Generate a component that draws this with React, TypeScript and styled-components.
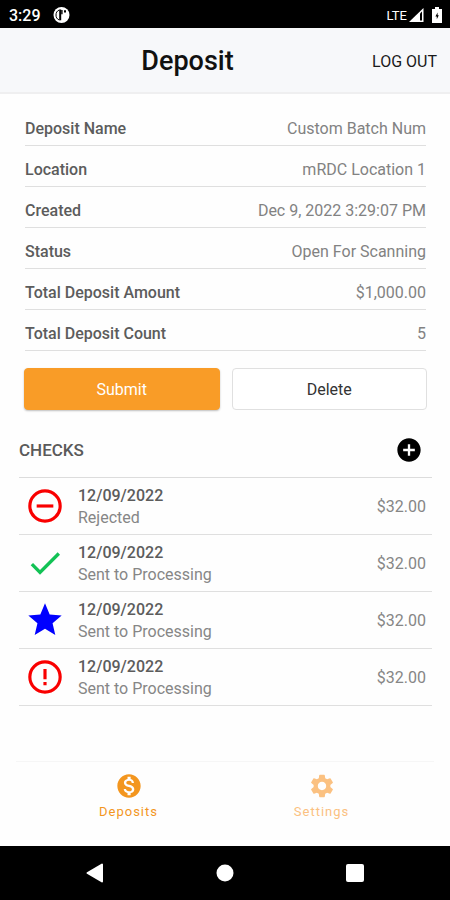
import React from "react";
import styled, { createGlobalStyle } from "styled-components";
import {
  MdAddCircle,
  MdCheck,
  MdMonetizationOn,
  MdSettings,
  MdStar,
} from "react-icons/md";

const GlobalStyle = createGlobalStyle`
  *, *::before, *::after { box-sizing: border-box; }
  body {
    margin: 0;
    background: #fefefe;
    color: #666;
    font-family: Roboto, "Liberation Sans", sans-serif;
    font-size: 16px;
  }
  button { font: inherit; cursor: pointer; }
  h1, h2, p, dl, dd, ul { margin: 0; padding: 0; }
`;

const Screen = styled.div`
  display: flex;
  flex-direction: column;
  min-height: 100vh;
`;

const StatusBar = styled.div`
  display: flex;
  align-items: center;
  height: 28px;
  padding: 2px 8px 0 9px;
  background: #000;
  color: #fff;
`;

const Clock = styled.time`
  margin-right: 12px;
  font-weight: 500;
`;

const Network = styled.span`
  margin: 0 2px 0 auto;
  font-size: 13px;
`;

const StatusIcon = styled.svg`
  display: block;
  height: 16px;

  & + & { margin-left: 8px; }
`;

const Header = styled.header`
  display: flex;
  align-items: center;
  gap: 10px;
  height: 66px;
  padding: 2px 13px 0;
  background: #f7f8fa;
  border-bottom: 2px solid #efeff0;
`;

const Title = styled.h1`
  flex: 1;
  color: #111;
  font-size: 27px;
  font-weight: 500;
  line-height: 32px;
  text-align: center;
`;

const LogOut = styled.button`
  padding: 0;
  border: 0;
  background: none;
  color: #1a1a1a;
  white-space: nowrap;
`;

const Main = styled.main`
  flex: 1;
  padding: 11px 18px 24px 19px;
`;

const Details = styled.dl`
  padding: 0 6px;
`;

const Detail = styled.div`
  display: flex;
  align-items: center;
  justify-content: space-between;
  height: 41px;
  padding-top: 6px;
  border-bottom: 1px solid #dfdfdf;
`;

const Term = styled.dt`
  color: #5c5c5c;
  font-weight: 500;
`;

const Value = styled.dd`
  color: #828282;
`;

const Actions = styled.div`
  display: grid;
  grid-template-columns: 1fr 1fr;
  gap: 12px;
  padding: 17px 5px 0;
`;

const ActionButton = styled.button<{ $primary?: boolean }>`
  height: 42px;
  border: 1px solid ${(p) => (p.$primary ? "#f99c27" : "#e0e0e0")};
  border-radius: 4px;
  background: ${(p) => (p.$primary ? "#f99c27" : "#fff")};
  color: ${(p) => (p.$primary ? "#fff" : "#333")};
  box-shadow: ${(p) => (p.$primary ? "0 1px 2px rgba(0, 0, 0, 0.25)" : "none")};
`;

const ChecksHeader = styled.div`
  display: flex;
  align-items: center;
  justify-content: space-between;
  height: 68px;
  padding: 13px 9px 0 0;
  border-bottom: 1px solid #dcdcdc;
`;

const SectionTitle = styled.h2`
  color: #5a5a5a;
  font-size: 17px;
  font-weight: 500;
`;

const IconButton = styled.button`
  display: flex;
  padding: 0;
  border: 0;
  background: none;
  color: #000;
`;

const CheckList = styled.ul`
  list-style: none;
`;

const CheckRow = styled.li`
  display: grid;
  grid-template-columns: 40px 1fr auto;
  align-items: center;
  column-gap: 13px;
  height: 57px;
  padding: 0 6px;
  border-bottom: 1px solid #dfdfdf;
`;

const CheckIcon = styled.span<{ $color: string }>`
  display: flex;
  color: ${(p) => p.$color};
`;

const CheckText = styled.div`
  padding-top: 2px;
  line-height: 22px;
`;

const CheckDate = styled.p`
  color: #5c5c5c;
  font-weight: 500;
`;

const CheckState = styled.p`
  color: #868686;
`;

const Amount = styled.span`
  color: #868686;
`;

const TabBar = styled.nav`
  display: grid;
  grid-template-columns: 1fr 1fr;
  align-items: start;
  height: 85px;
  margin: 0 16px;
  padding: 10px 16px 0;
  border-top: 1px solid #f6f6f6;
`;

const Tab = styled.button<{ $active?: boolean }>`
  display: flex;
  flex-direction: column;
  align-items: center;
  gap: 2px;
  padding: 0;
  border: 0;
  background: none;
  color: ${(p) => (p.$active ? "#f3961f" : "#fbc181")};
  font-size: 13px;
  line-height: 20px;
  letter-spacing: 1px;
`;

const SystemBar = styled.div`
  display: grid;
  grid-template-columns: repeat(3, 1fr);
  align-items: center;
  justify-items: center;
  height: 54px;
  padding: 0 30px;
  background: #000;
`;

const SystemButton = styled.button`
  display: flex;
  padding: 0;
  border: 0;
  background: none;
`;

type IconProps = { size: number };

const RejectedIcon = ({ size }: IconProps) => (
  <svg width={size} height={size} viewBox="0 0 24 24" fill="none" stroke="currentColor" strokeWidth="1.9" aria-hidden="true">
    <circle cx="12" cy="12" r="9.1" />
    <path d="M7 12h10" />
  </svg>
);

const AlertIcon = ({ size }: IconProps) => (
  <svg width={size} height={size} viewBox="0 0 24 24" fill="none" stroke="currentColor" strokeWidth="1.9" aria-hidden="true">
    <circle cx="12" cy="12" r="9.1" />
    <path d="M12 7.200v6.200M12 15v1.900" />
  </svg>
);

const details = [
  ["Deposit Name", "Custom Batch Num"],
  ["Location", "mRDC Location 1"],
  ["Created", "Dec 9, 2022 3:29:07 PM"],
  ["Status", "Open For Scanning"],
  ["Total Deposit Amount", "$1,000.00"],
  ["Total Deposit Count", "5"],
];

const checks: { icon: React.ComponentType<IconProps>; color: string; state: string }[] = [
  { icon: RejectedIcon, color: "#f90000", state: "Rejected" },
  { icon: MdCheck, color: "#12c255", state: "Sent to Processing" },
  { icon: MdStar, color: "#0000ff", state: "Sent to Processing" },
  { icon: AlertIcon, color: "#f90000", state: "Sent to Processing" },
];

export default function App() {
  return (
    <Screen>
      <GlobalStyle />
      <StatusBar>
        <Clock>3:29</Clock>
        <StatusIcon width="17" viewBox="0 0 17 16" aria-hidden="true">
          <circle cx="8.5" cy="8" r="8" fill="#fff" />
          <path d="M6.200 3C3.800 4 3 5.800 3 8s.8 4 3.200 5" fill="none" stroke="#000" strokeWidth="1" />
          <path d="M7.200 2.500v10.800" stroke="#000" strokeWidth="2" />
          <path d="M8.200 3h1.400v4.200H8.200zM11 3.200h2v2.200h-2z" fill="#000" />
        </StatusIcon>
        <Network>LTE</Network>
        <StatusIcon width="15" viewBox="0 0 15 16" aria-hidden="true">
          <path d="M0 15 14.5 1v14z" fill="#fff" />
          <path d="M11 6.5 13 4.6V13.5h-2z" fill="#000" />
        </StatusIcon>
        <StatusIcon width="10" viewBox="0 0 10 16" aria-hidden="true">
          <path d="M3 0h4v2h3v14H0V2h3z" fill="#fff" />
          <path d="M5.600 5.400 3.400 9.400h1.400v2.800l2-4H5.600z" fill="#000" />
        </StatusIcon>
      </StatusBar>
      <Header>
        <Title>Deposit</Title>
        <LogOut type="button">LOG OUT</LogOut>
      </Header>
      <Main>
        <Details>
          {details.map(([term, value]) => (
            <Detail key={term}>
              <Term>{term}</Term>
              <Value>{value}</Value>
            </Detail>
          ))}
        </Details>
        <Actions>
          <ActionButton type="button" $primary>Submit</ActionButton>
          <ActionButton type="button">Delete</ActionButton>
        </Actions>
        <ChecksHeader>
          <SectionTitle>CHECKS</SectionTitle>
          <IconButton type="button" aria-label="Add check">
            <MdAddCircle size={28} />
          </IconButton>
        </ChecksHeader>
        <CheckList>
          {checks.map(({ icon: Icon, color, state }, index) => (
            <CheckRow key={index}>
              <CheckIcon $color={color}>
                <Icon size={40} />
              </CheckIcon>
              <CheckText>
                <CheckDate>12/09/2022</CheckDate>
                <CheckState>{state}</CheckState>
              </CheckText>
              <Amount>$32.00</Amount>
            </CheckRow>
          ))}
        </CheckList>
      </Main>
      <TabBar>
        <Tab type="button" $active aria-current="page">
          <MdMonetizationOn size={28} aria-hidden="true" />
          Deposits
        </Tab>
        <Tab type="button">
          <MdSettings size={28} aria-hidden="true" />
          Settings
        </Tab>
      </TabBar>
      <SystemBar>
        <SystemButton type="button" aria-label="Back">
          <svg width="18" height="20" viewBox="0 0 18 20">
            <path d="M16 1.5v17L1.5 10z" fill="#fff" stroke="#fff" strokeWidth="2" strokeLinejoin="round" />
          </svg>
        </SystemButton>
        <SystemButton type="button" aria-label="Home">
          <svg width="18" height="18" viewBox="0 0 18 18">
            <circle cx="9" cy="9" r="8.5" fill="#fff" />
          </svg>
        </SystemButton>
        <SystemButton type="button" aria-label="Recent apps">
          <svg width="20" height="20" viewBox="0 0 20 20">
            <rect x="1" y="1" width="18" height="18" rx="2" fill="#fff" />
          </svg>
        </SystemButton>
      </SystemBar>
    </Screen>
  );
}
